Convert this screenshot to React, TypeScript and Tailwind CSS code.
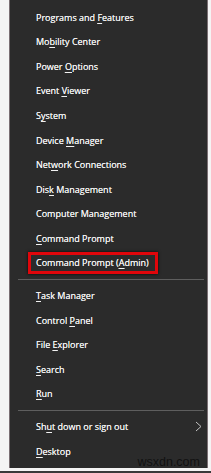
import { Fragment } from 'react';

type Item = { label: string; key: number; arrow?: boolean; boxed?: boolean };

// key = index of the underlined access-key letter, -1 for none
const groups: Item[][] = [
  [
    { label: 'Programs and Features', key: 13 },
    { label: 'Mobility Center', key: 2 },
    { label: 'Power Options', key: 6 },
    { label: 'Event Viewer', key: 6 },
    { label: 'System', key: 1 },
    { label: 'Device Manager', key: 7 },
    { label: 'Network Connections', key: 3 },
    { label: 'Disk Management', key: 3 },
    { label: 'Computer Management', key: -1 },
    { label: 'Command Prompt', key: 0 },
    { label: 'Command Prompt (Admin)', key: 16, boxed: true },
  ],
  [
    { label: 'Task Manager', key: 0 },
    { label: 'Control Panel', key: 8 },
    { label: 'File Explorer', key: 5 },
    { label: 'Search', key: 0 },
    { label: 'Run', key: 0 },
  ],
  [
    { label: 'Shut down or sign out', key: 2, arrow: true },
    { label: 'Desktop', key: 0 },
  ],
];

function Label({ text, k }: { text: string; k: number }) {
  if (k < 0) return <span>{text}</span>;
  return (
    <span>
      {text.slice(0, k)}
      <span className="underline underline-offset-[2px] decoration-1">{text[k]}</span>
      {text.slice(k + 1)}
    </span>
  );
}

export default function App() {
  return (
    <div className="w-[211px] h-[473px] bg-[#f4f4f4] overflow-hidden flex flex-col">
      <div className="flex flex-1 pl-[9px] pr-[3px]">
        <div className="relative flex-1 flex flex-col bg-[#2b2b2b] border-l border-r border-[#7a6f73] pt-[5px] font-['Open_Sans',sans-serif] text-[9px] text-[#f2f2f2] [text-shadow:0_0_0.6px_#f2f2f2]">
          {groups.map((group, gi) => (
            <Fragment key={gi}>
              {gi > 0 && (
                <div className="h-[8px] flex items-center pl-[8px] pr-[3px]">
                  <div className="h-px w-full bg-[#5e5e5e]" />
                </div>
              )}
              {group.map((item) => (
                <div key={item.label} className="h-[24.6px] flex items-center pl-[26px] pr-[5px]">
                  {item.boxed ? (
                    <div className="-ml-[8px] pl-[5px] pr-[6px] h-[22px] flex items-center border-[3px] border-[#e0060b] shadow-[0_0_3px_rgba(0,0,0,0.8)]">
                      <Label text={item.label} k={item.key} />
                    </div>
                  ) : (
                    <Label text={item.label} k={item.key} />
                  )}
                  {item.arrow && (
                    <svg className="ml-auto" width="7" height="11" viewBox="0 0 7 11">
                      <path d="M1 1 L6 5.5 L1 10" fill="none" stroke="#c4c4c4" strokeWidth="1" />
                    </svg>
                  )}
                </div>
              ))}
            </Fragment>
          ))}
          <span className="absolute right-[7px] bottom-0 font-['Liberation_Sans',sans-serif] text-[12.5px] text-[#111] leading-none [text-shadow:none]">
            wsxdn.com
          </span>
        </div>
      </div>
      <div className="h-[3px] bg-[#f4f4f4]" />
      <div className="h-[2px] bg-[#3a3a3a]" />
    </div>
  );
}
